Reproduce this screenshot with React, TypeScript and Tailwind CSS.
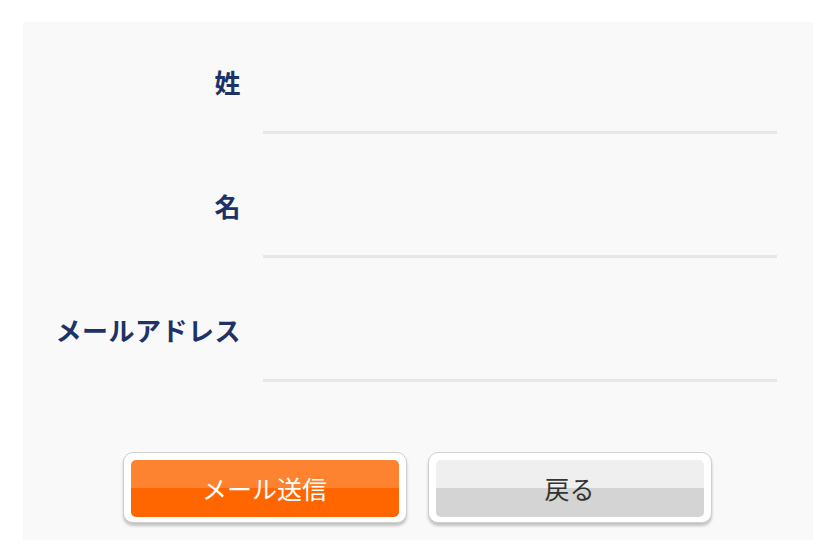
const font = {
  fontFamily: '"Noto Sans CJK JP", "Noto Sans", sans-serif',
};

const fields = ["姓", "名", "メールアドレス"];

function Field({ label }: { label: string }) {
  return (
    <div className="flex h-[124px]">
      <label className="w-[218px] shrink-0 pt-[47px] text-right text-[26px] leading-[26px] font-bold tracking-[0.5px] text-[#1d3366]">
        {label}
      </label>
      <div className="ml-[22px] h-[112px] flex-1 border-b-[3px] border-[#e6e6e6]" />
    </div>
  );
}

export default function App() {
  return (
    <div className="min-h-[554px] bg-white pt-[22px] pl-[23px]" style={font}>
      <div className="h-[518px] w-[790px] bg-[#f9f9f9] pr-[36px]">
        {fields.map((f) => (
          <Field key={f} label={f} />
        ))}

        <div className="mt-[58px] flex justify-center gap-[21px] pl-[34px]">
          <div className="rounded-[10px] border border-[#cfcfcf] bg-white p-[7px] pb-[5px] shadow-[0_3px_3px_rgba(0,0,0,0.22)]">
            <button className="h-[57px] w-[268px] rounded-[5px] bg-[linear-gradient(#fd8330_0,#fd8330_49%,#ff6600_49%,#ff6600_100%)] text-[25px] leading-none text-white">
              メール送信
            </button>
          </div>
          <div className="rounded-[10px] border border-[#cfcfcf] bg-white p-[7px] pb-[5px] shadow-[0_3px_3px_rgba(0,0,0,0.22)]">
            <button className="h-[57px] w-[268px] rounded-[5px] bg-[linear-gradient(#efefef_0,#efefef_49%,#d4d4d4_49%,#d4d4d4_100%)] text-[25px] leading-none text-[#333333]">
              戻る
            </button>
          </div>
        </div>
      </div>
    </div>
  );
}
